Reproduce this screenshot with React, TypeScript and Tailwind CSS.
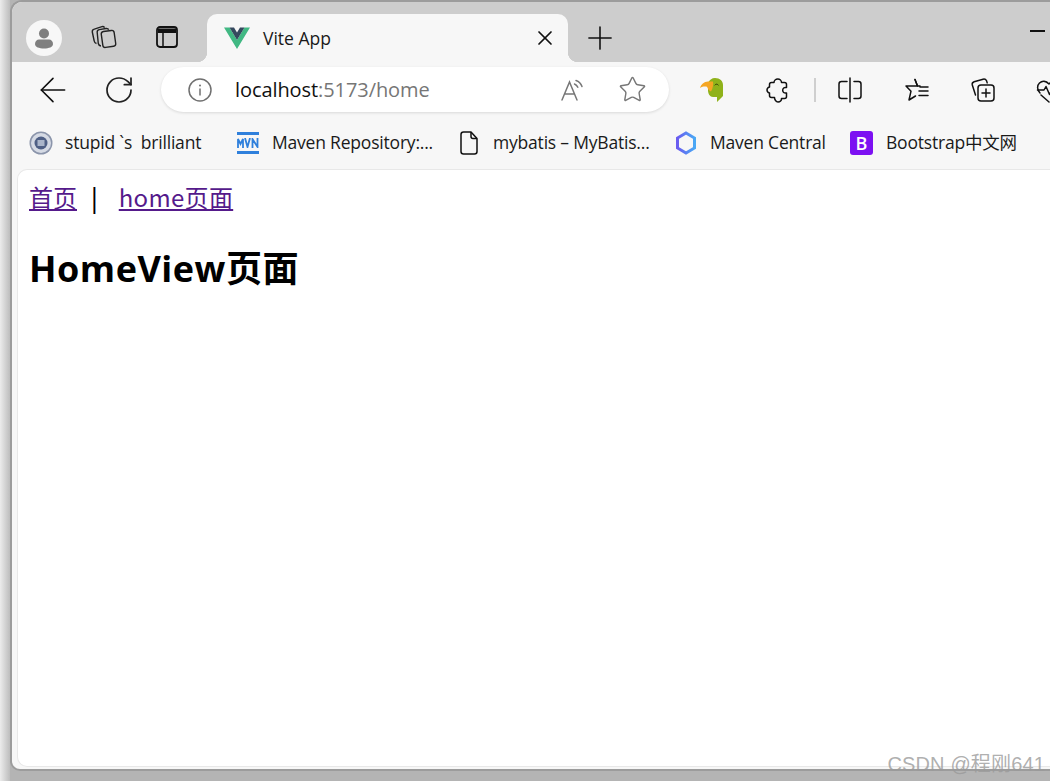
import { ArrowLeft, Plus, RotateCw, Star, X } from 'lucide-react';

const uiFont = "font-['Open_Sans','Liberation_Sans','Noto_Sans_CJK_SC',sans-serif]";

function ProfileIcon() {
  return (
    <div className="w-9 h-9 rounded-full bg-[#f7f7f7] flex items-center justify-center">
      <svg width="24" height="24" viewBox="0 0 24 24" fill="#7f7f7f">
        <circle cx="12" cy="7.500" r="5" />
        <path d="M3 18c0-3 2-4.500 4-4.500h10c2 0 4 1.500 4 4.500 0 3-4 4.500-9 4.500S3 21 3 18z" />
      </svg>
    </div>
  );
}

function WorkspacesIcon() {
  return (
    <svg width="26" height="26" viewBox="0 0 26 26" fill="none" stroke="#222" strokeWidth="1.400" strokeLinejoin="round">
      <rect x="11" y="7" width="13" height="16" rx="2.500" transform="rotate(-8 17 15)" fill="#cdcdcd" />
      <path d="M10 22c-1.500-.2-2.400-1-2.700-2.500L6.200 8.500c-.2-1.500.6-2.600 2-2.900L15 4.500c1.300-.2 2.200.2 2.800 1.200" />
      <path d="M5.500 19.500c-1.400-.3-2.100-1.200-2.300-2.500L1.300 8c-.2-1.500.6-2.600 2-2.900L11 2.600c1.200-.2 2 .1 2.600 1" />
    </svg>
  );
}

function TabsIcon() {
  return (
    <svg width="22" height="22" viewBox="0 0 22 22" fill="none" stroke="#111" strokeWidth="1.800">
      <rect x="1" y="1" width="20" height="20" rx="3" />
      <path d="M2 2.500h18v4.500H2z" fill="#111" stroke="none" />
      <path d="M7 6v15" strokeWidth="1.500" />
    </svg>
  );
}

function VueLogo() {
  return (
    <svg width="26" height="22" viewBox="0 0 26 22">
      <path d="M0 .5h5.500L13 13 20.500.5H26L13 22z" fill="#41b883" />
      <path d="M5.500.5h4.500L13 5.500 16 .5h4.500L13 13z" fill="#35495e" />
    </svg>
  );
}

function ReadAloudIcon() {
  return (
    <svg width="26" height="26" viewBox="0 0 26 26" fill="none" stroke="#777" strokeWidth="1.500" strokeLinecap="round">
      <path d="M2 23 9.500 5 17 23M4.800 17h9.400" />
      <path d="M14.500 7c1.500.6 2.700 1.800 3.300 3.300M16 3.500c2.900 1 5 3.200 6 6" />
    </svg>
  );
}

function ParrotIcon() {
  return (
    <svg width="24" height="24" viewBox="0 0 24 24">
      <path d="M8 5c1-3 4-5 7-5 5 0 8 3 8 7v11l-6 6v-5h-4c-3 0-5-3-5-7z" fill="#8fb21a" />
      <path d="M13 3.500 8 3.500C4 3.500 1 6.500 0 10c2.500-1.600 5-1.800 7-1.200.8 2.400 2 3.700 4 4.700C13 10 13.500 6.500 13 3.500z" fill="#f5a623" />
      <path d="M15 7c.8-1.200 2.200-1.200 3.200 0" stroke="#2c3a06" strokeWidth="1" fill="none" strokeLinecap="round" />
    </svg>
  );
}

function PuzzleIcon() {
  return (
    <svg width="24" height="26" viewBox="0 0 24 26" fill="none" stroke="#111" strokeWidth="1.500" strokeLinejoin="round">
      <path d="M8 5.500c0-2 1.800-3.500 3.800-3.500s3.700 1.500 3.700 3.500h3c1.200 0 2 .8 2 2v3c-2.500-.5-3.800 1-3.800 2.800s1.300 3.200 3.800 2.700v3.500c0 1.200-.8 2-2 2h-3c.3 2-1.500 3.500-3.500 3.500S8.500 22.500 8.500 20.500h-3c-1.200 0-2-.8-2-2V16C1.800 15.500 1 14.300 1 13s.8-2.500 2.500-3V7.500c0-1.200.8-2 2-2z" />
    </svg>
  );
}

function SplitIcon() {
  return (
    <svg width="24" height="26" viewBox="0 0 24 26" fill="none" stroke="#111" strokeWidth="1.500" strokeLinecap="round">
      <path d="M9 4.500H3.500C2 4.500 1 5.500 1 7v12c0 1.500 1 2.500 2.500 2.500H9" />
      <path d="M16 4.500h4.500C22 4.500 23 5.500 23 7v12c0 1.500-1 2.500-2.500 2.500H16" />
      <path d="M12 1v24" />
    </svg>
  );
}

function FavoritesIcon() {
  return (
    <svg width="26" height="26" viewBox="0 0 26 26" fill="none" stroke="#111" strokeWidth="1.500" strokeLinejoin="round" strokeLinecap="round">
      <path d="M11 2.500 13.500 9H2l5 5.200L5 23l6.500-4" />
      <path d="M11 2.500 13.500 9H16M15 14h9M16 10h8M15 18.500h9" />
    </svg>
  );
}

function CollectionsIcon() {
  return (
    <svg width="26" height="26" viewBox="0 0 26 26" fill="none" stroke="#111" strokeWidth="1.500" strokeLinejoin="round" strokeLinecap="round">
      <path d="M5.500 18 2.300 8c-.4-1.600.3-2.800 1.800-3.300l9-2.500c1.600-.4 2.700.1 3.500 1.700l.6 2" />
      <rect x="8" y="8" width="16" height="16" rx="3" fill="#f7f7f7" />
      <path d="M16 12v8M12 16h8" />
    </svg>
  );
}

function HeartbeatIcon() {
  return (
    <svg width="26" height="26" viewBox="0 0 26 26" fill="none" stroke="#111" strokeWidth="1.500" strokeLinejoin="round" strokeLinecap="round">
      <path d="M4 16C1 13 .8 8.500 3.500 6c2.700-2.500 6.500-2.200 9.500 1 3-3.200 6.800-3.500 9.500-1" />
      <path d="M1.500 13H8l2-3.500 3.500 8 2.500-4.500h5" />
      <path d="M5 18l8 7" />
    </svg>
  );
}

function InfoIcon() {
  return (
    <svg width="24" height="24" viewBox="0 0 24 24" fill="none" stroke="#707070" strokeWidth="1.500">
      <circle cx="12" cy="12" r="11" />
      <path d="M12 10.500v7" />
      <circle cx="12" cy="7.500" r="1" fill="#707070" stroke="none" />
    </svg>
  );
}

function SiteBadge() {
  return (
    <svg width="24" height="24" viewBox="0 0 24 24">
      <circle cx="12" cy="12" r="11.500" fill="#8b95ab" />
      <circle cx="12" cy="12" r="10" fill="#d5dae4" />
      <circle cx="12" cy="12" r="6.500" fill="#4e5f85" />
      <rect x="8.500" y="9" width="7" height="6" fill="#aab5ca" />
    </svg>
  );
}

function MvnIcon() {
  return (
    <div className="w-[22px] h-[22px] flex flex-col justify-between">
      <div className="h-[3px] bg-[#2f80dc]" />
      <svg width="22" height="10" viewBox="0 0 22 10" fill="none" stroke="#2f80dc" strokeWidth="1.800">
        <path d="M1 10V1l2.500 5L6 1v9M8 0l2.500 9L13 0M15.500 10V1L20.500 9V0" />
      </svg>
      <div className="h-[3px] bg-[#2f80dc]" />
    </div>
  );
}

function PageIcon() {
  return (
    <svg width="18" height="24" viewBox="0 0 18 24" fill="none" stroke="#111" strokeWidth="1.500" strokeLinejoin="round">
      <path d="M3.500 1H11l6 6.500V20.500c0 1.500-1 2.500-2.500 2.500h-11C2 23 1 22 1 20.500v-17C1 2 2 1 3.500 1z" />
      <path d="M11 1v4.500c0 1.200.8 2 2 2h4" />
    </svg>
  );
}

function HexIcon() {
  return (
    <svg width="20" height="24" viewBox="0 0 20 24" fill="none" strokeWidth="3">
      <defs>
        <linearGradient id="hexGrad" x1="0" y1="0" x2="1" y2="0">
          <stop offset="0" stopColor="#6a5cf0" />
          <stop offset="1" stopColor="#4aa8f5" />
        </linearGradient>
      </defs>
      <path d="M10 2l8.500 5v10L10 22l-8.500-5V7z" stroke="url(#hexGrad)" />
    </svg>
  );
}

function BootstrapIcon() {
  return (
    <div className="w-[23px] h-[24px] rounded-[3px] bg-[#7c10f2] text-white text-[18px] leading-none font-semibold flex items-center justify-center font-['Open_Sans',sans-serif]">
      B
    </div>
  );
}

function Bookmark({ icon, label, iconBox, width }: { icon: React.ReactNode; label: string; iconBox: string; width: string }) {
  return (
    <div className={`flex items-center shrink-0 ${width}`}>
      <div className={`flex items-center justify-center shrink-0 ${iconBox}`}>{icon}</div>
      <span className="text-[17.500px] text-[#1a1a1a] whitespace-pre tracking-[-0.2px] -translate-y-[1px]">{label}</span>
    </div>
  );
}

export default function App() {
  return (
    <div className={`relative w-[1050px] h-[781px] overflow-hidden bg-[#b4b4b4] ${uiFont}`}>
      <div className="absolute left-0 top-0 w-[10px] h-full bg-gradient-to-r from-[#ececec] to-[#bdbdbd]" />
      <div className="relative ml-[10px] mt-0 h-[771px] border-2 border-r-0 border-[#9c9c9c] rounded-tl-[12px] rounded-bl-[10px] bg-[#f7f7f7] overflow-hidden flex flex-col">
        {/* tab strip */}
        <div className="h-[60px] shrink-0 bg-[#cdcdcd] flex items-end pl-[14px]">
          <div className="self-start mt-[18px] w-[36px] shrink-0">
            <ProfileIcon />
          </div>
          <div className="self-start mt-[22px] ml-[29px] w-[26px] shrink-0">
            <WorkspacesIcon />
          </div>
          <div className="self-start mt-[24px] ml-[39px] w-[22px] shrink-0">
            <TabsIcon />
          </div>
          <div className="relative ml-[29px] w-[361px] shrink-0 h-[48px] bg-[#f7f7f7] rounded-t-[10px] flex items-center pl-[17px] pr-[11px]">
            <div className="absolute -left-[10px] bottom-0 w-[10px] h-[10px] bg-[radial-gradient(circle_at_0_0,#cdcdcd_10px,#f7f7f7_10.500px)]" />
            <div className="absolute -right-[10px] bottom-0 w-[10px] h-[10px] bg-[radial-gradient(circle_at_100%_0,#cdcdcd_10px,#f7f7f7_10.500px)]" />
            <VueLogo />
            <span className="ml-[13px] text-[17.500px] text-[#1a1a1a] flex-1">Vite App</span>
            <X size={24} strokeWidth={1.700} color="#111" />
          </div>
          <div className="self-start mt-[17px] ml-[13px] shrink-0">
            <Plus size={38} strokeWidth={1} color="#111" />
          </div>
          <div className="self-start mt-[28px] ml-[411px] w-[15px] h-[2px] bg-[#111] shrink-0" />
        </div>

        {/* toolbar */}
        <div className="h-[58px] shrink-0 flex items-center pl-[21px] pb-[3px] [&>*]:shrink-0">
          <ArrowLeft size={40} strokeWidth={0.950} color="#111" />
          <RotateCw size={32} strokeWidth={1.300} color="#222" className="ml-[30px]" />
          <div className="ml-[26px] w-[508px] h-[45px] rounded-full bg-white shadow-[0_1px_3px_rgba(0,0,0,0.12)] flex items-center pl-[27px] pr-[22px]">
            <InfoIcon />
            <div className="ml-[23px] flex-1 text-[20px] tracking-[-0.08px] -translate-y-[0.5px]">
              <span className="text-[#111]">localhost</span>
              <span className="text-[#767676]">:5173/home</span>
            </div>
            <ReadAloudIcon />
            <Star size={29} strokeWidth={1.200} color="#777" className="ml-[32px]" />
          </div>
          <div className="ml-[31px]">
            <ParrotIcon />
          </div>
          <div className="ml-[42px]">
            <PuzzleIcon />
          </div>
          <div className="ml-[24px] w-[2px] h-[24px] bg-[#cfcfcf]" />
          <div className="ml-[22px]">
            <SplitIcon />
          </div>
          <div className="ml-[42px]">
            <FavoritesIcon />
          </div>
          <div className="ml-[40px]">
            <CollectionsIcon />
          </div>
          <div className="ml-[40px]">
            <HeartbeatIcon />
          </div>
        </div>

        {/* bookmarks bar */}
        <div className="h-[49px] shrink-0 flex items-center pl-[17px] pb-[3px]">
          <Bookmark icon={<SiteBadge />} label="stupid `s  brilliant" iconBox="w-[24px] mr-[12px]" width="w-[208px]" />
          <Bookmark icon={<MvnIcon />} label="Maven Repository:..." iconBox="w-[22px] mr-[13px]" width="w-[223px]" />
          <Bookmark icon={<PageIcon />} label="mybatis – MyBatis..." iconBox="w-[18px] mr-[15px]" width="w-[216px]" />
          <Bookmark icon={<HexIcon />} label="Maven Central" iconBox="w-[20px] mr-[14px]" width="w-[174px]" />
          <Bookmark icon={<BootstrapIcon />} label="Bootstrap中文网" iconBox="w-[23px] mr-[13px]" width="w-[180px]" />
        </div>

        {/* page */}
        <div className="flex-1 ml-[5px] mb-[2px] bg-white rounded-tl-[10px] rounded-bl-[10px] border-t border-l border-b border-[#e8e8e8] pl-[11px] pt-[9px] font-['Noto_Sans_CJK_SC','Liberation_Sans',sans-serif] text-black">
          <div className="text-[24px] leading-[36px] flex">
            <a href="#home" className="underline text-[#551a8b]">首页</a>
            <span className="ml-[14px] font-medium">|</span>
            <a href="#view" className="underline text-[#551a8b] ml-[21px] tracking-[0.3px]">home页面</a>
          </div>
          <h1 className="mt-[32px] text-[36px] leading-[44px] font-bold tracking-[0.5px] font-['Open_Sans','Noto_Sans_CJK_SC',sans-serif]">HomeView页面</h1>
        </div>
      </div>

      {/* watermark baked into the screenshot */}
      <div className="absolute right-[5px] bottom-[4px] text-[20px] leading-[26px] tracking-[0.15px] text-[#9a9a9a]/80 font-['Liberation_Sans','Noto_Sans_CJK_SC',sans-serif]">
        CSDN @程刚641
      </div>
    </div>
  );
}
